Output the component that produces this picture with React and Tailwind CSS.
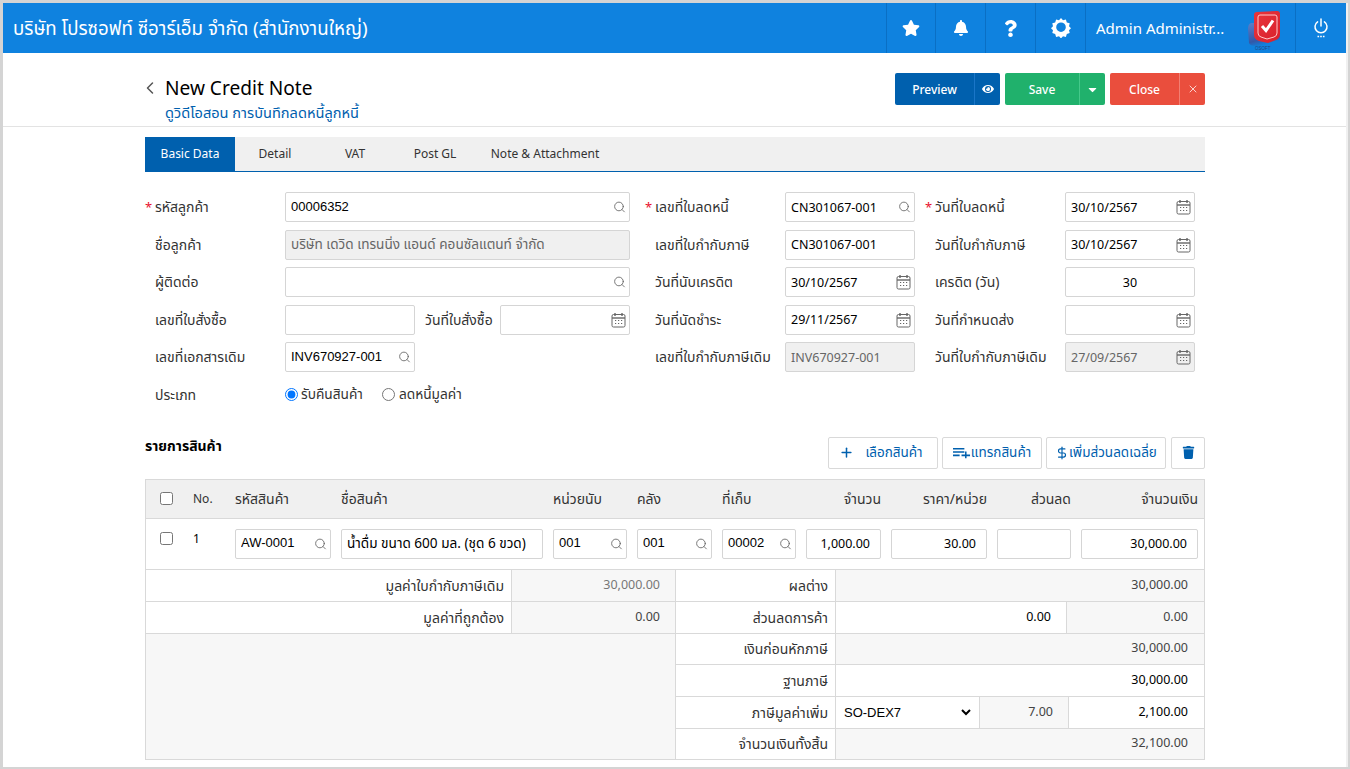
import React from "react";
import { Search, Plus, ChevronLeft, X, DollarSign } from "lucide-react";
import { FaStar, FaBell, FaQuestion, FaTrash, FaCaretDown, FaEye } from "react-icons/fa";

const FONT = "font-['Noto_Sans','Noto_Sans_Thai','DejaVu_Sans',sans-serif]";

function Cal() {
  return (
    <svg width="15" height="16" viewBox="0 0 15 16" fill="none" className="text-[#666]">
      <rect x="1" y="2.5" width="13" height="12.5" rx="1.5" stroke="currentColor" />
      <path d="M1 6h13" stroke="currentColor" strokeWidth="1.4" />
      <path d="M4 1v3M11 1v3" stroke="currentColor" strokeWidth="1.4" />
      <path d="M4 8.5h1.2M7 8.5h1.2M10 8.5h1.2M4 11.5h1.2M7 11.5h1.2M10 11.5h1.2" stroke="currentColor" strokeWidth="1.2" />
    </svg>
  );
}

function Field({ value = "", icon, disabled, align, w, arial, thai, cls = "", h = "h-[30px]" }) {
  return (
    <div className={`relative ${h} ${w || "w-full"} ${cls}`}>
      <input
        readOnly
        value={value}
        className={`h-full w-full rounded-[2px] border border-[#d5d5d5] px-[5px] outline-none ${
          disabled ? "bg-[#f0f0f0] text-[#666]" : "bg-white text-black"
        } ${align === "center" ? "text-center" : align === "right" ? "text-right pr-[10px]" : ""} ${
          arial ? "font-['Liberation_Sans',sans-serif] text-[13px] pb-[2px]" : thai ? "text-[13.6px]" : "text-[12.5px]"
        }`}
      />
      {icon === "search" && (
        <Search size={13} strokeWidth={1.6} className="absolute right-[4px] top-1/2 -translate-y-1/2 text-[#666]" />
      )}
      {icon === "cal" && (
        <span className="absolute right-[4px] top-1/2 -translate-y-1/2">
          <Cal />
        </span>
      )}
    </div>
  );
}

function Row({ label, req, pr = "", children }) {
  return (
    <div className={`flex items-center ${pr}`}>
      <div className="relative w-[140px] shrink-0 pl-[10px] text-[14px] text-[#333] leading-[29px] h-[30px] whitespace-nowrap">
        {req && <span className="absolute left-0 top-[1px] text-[#e8112d] text-[13px]">*</span>}
        {label}
      </div>
      <div className="flex-1 min-w-0 flex items-center">{children}</div>
    </div>
  );
}

function Gear() {
  return (
    <svg width="20" height="20" viewBox="0 0 20 20" className="text-white">
      <path
        fill="currentColor"
        fillRule="evenodd"
        d="M10 0.8l2 2.2 2.9-.7.9 2.9 2.9.9-.7 2.9 2 2-2 2 .7 2.9-2.9.9-.9 2.9-2.9-.7-2 2.2-2-2.2-2.9.7-.9-2.9-2.9-.9.7-2.9-2-2 2-2-.7-2.9 2.9-.9.9-2.9 2.9.7z M10 5.2a4.8 4.8 0 100 9.6 4.8 4.8 0 000-9.6z"
        transform="translate(0 -0.8)"
      />
    </svg>
  );
}

function Power() {
  return (
    <svg width="16" height="20" viewBox="0 0 16 20" fill="none" stroke="white" strokeWidth="1.5">
      <path d="M8 1v7" strokeLinecap="round" />
      <path d="M4.6 3.8a6 6 0 106.8 0" strokeLinecap="round" />
      <path d="M4.5 18.5h1.6M7.2 18.5h1.6M9.9 18.5h1.6" strokeWidth="1.5" />
    </svg>
  );
}

function Logo() {
  return (
    <svg width="36" height="40" viewBox="0 0 36 40">
      <defs>
        <linearGradient id="lg" x1="0" y1="0" x2="0.4" y2="1">
          <stop offset="0" stopColor="#5b7fc8" />
          <stop offset="0.75" stopColor="#3358a8" />
          <stop offset="1" stopColor="#0f82df" />
        </linearGradient>
        <linearGradient id="lr" x1="0" y1="0" x2="1" y2="1">
          <stop offset="0" stopColor="#e8353c" />
          <stop offset="1" stopColor="#d9202b" />
        </linearGradient>
      </defs>
      <path d="M3 12 Q0 13 0 18 L1 32 Q2 35 8 35 L28 35 Q32 33 32 28 L32 12 Z" fill="url(#lg)" />
      <path d="M9 1 Q6 1 6 4 L6 24 Q6 28 11 30 L20 32 L28 29 Q32 27 32 23 L32 3 Q32 0 29 0 Z" fill="url(#lr)" />
      <path d="M12 4 L27 4 Q29 4 29 6 L29 22 Q29 25 26 26 L19 28 L13 26 Q10 25 10 22 L10 6 Q10 4 12 4 Z" fill="none" stroke="#ffc9c9" strokeWidth="1" />
      <path d="M14 15 L18 19.5 L25 9.5" fill="none" stroke="white" strokeWidth="3" />
      <text x="7" y="38.5" fontSize="4.5" fill="#24457f" fontFamily="'Liberation Sans',sans-serif">OSOFT</text>
    </svg>
  );
}

function HeadIcon({ children, w = "w-[50px]" }) {
  return <div className={`${w} h-full border-l border-[#0a6fc4] flex items-center justify-center shrink-0`}>{children}</div>;
}

function BtnPair({ bg, sep, label, w1, w2, icon }) {
  return (
    <div className={`flex h-[32px] rounded-[2px] text-white text-[12px] font-medium ${bg}`}>
      <div className={`${w1} flex items-center justify-center pt-[1px]`}>{label}</div>
      <div className={`${w2} flex items-center justify-center border-l ${sep}`}>{icon}</div>
    </div>
  );
}

function Tool({ w, children }) {
  return (
    <div className={`${w} h-[32px] border border-[#d9d9d9] rounded-[2px] flex items-center justify-center text-[13.5px] text-[#0060ae] bg-white whitespace-nowrap`}>
      {children}
    </div>
  );
}

function Sum({ label, children, h = "h-[32px]", last }) {
  return (
    <div className={`flex ${h} ${last ? "" : "border-b border-[#d9d9d9]"}`}>
      <div className="w-[160px] shrink-0 border-r border-[#d9d9d9] text-right pr-[7px] text-[14px] text-[#333] flex items-center justify-end bg-white">
        {label}
      </div>
      <div className="flex-1 flex min-w-0">{children}</div>
    </div>
  );
}

function Val({ children, grey, dark, cls = "flex-1", pr = "pr-[16px]" }) {
  return (
    <div
      className={`${cls} ${pr} flex items-center justify-end text-[12.5px] ${grey ? "bg-[#f7f7f7]" : "bg-white"} ${
        dark ? "text-black" : "text-[#444]"
      }`}
    >
      {children}
    </div>
  );
}

const COLS = "grid grid-cols-[79px_96px_202px_74px_75px_74px_75px_96px_74px_117px] gap-x-[10px] items-center pr-[7px]";

export default function App() {
  return (
    <div className={`${FONT} w-[1350px] h-[769px] overflow-hidden border-t-[3px] border-l-[3px] border-r-[2px] border-b-[2px] border-[#d4d4d4] bg-white`}>
      <div className="h-full border-r-[2px] border-[#f0f0f0]">
        <header className="h-[50px] bg-[#0f82df] flex items-center text-white">
          <div className="flex-1 pl-[10px] text-[18.7px] whitespace-nowrap">บริษัท โปรซอฟท์ ซีอาร์เอ็ม จำกัด (สำนักงานใหญ่)</div>
          <HeadIcon w="w-[49px]"><FaStar size={18} /></HeadIcon>
          <HeadIcon><FaBell size={16} /></HeadIcon>
          <HeadIcon><FaQuestion size={17} /></HeadIcon>
          <HeadIcon><Gear /></HeadIcon>
          <div className="w-[210px] h-full border-l border-[#0a6fc4] flex items-center pl-[10px] shrink-0 text-[15px] whitespace-nowrap">
            <span className="w-[152px]">Admin Administr...</span>
            <span className="block h-[40px] mt-[6px]"><Logo /></span>
          </div>
          <HeadIcon w="w-[51px]"><Power /></HeadIcon>
        </header>

        <section className="h-[74px] border-b border-[#e3e3e3] pl-[142px] pr-[141px] flex justify-between">
          <div className="flex pt-[23px]">
            <ChevronLeft size={20} strokeWidth={1.8} className="text-[#555] w-[20px] mt-[2px] -translate-x-[5px]" />
            <div>
              <div className="text-[19.1px] leading-[24px] text-black">New Credit Note</div>
              <div className="text-[14.6px] leading-[24px] text-[#0060ae] whitespace-nowrap">ดูวิดีโอสอน การบันทึกลดหนี้ลูกหนี้</div>
            </div>
          </div>
          <div className="flex gap-[5px] pt-[20px]">
            <BtnPair bg="bg-[#0060ae]" sep="border-[#1a76c8]" label="Preview" w1="w-[79px]" w2="w-[26px]" icon={<FaEye size={12} />} />
            <BtnPair bg="bg-[#20b16c]" sep="border-[#45c98a]" label="Save" w1="w-[74px]" w2="w-[26px]" icon={<FaCaretDown size={13} />} />
            <BtnPair bg="bg-[#ea4e3d]" sep="border-[#f27f72]" label="Close" w1="w-[69px]" w2="w-[26px]" icon={<X size={12} strokeWidth={1.5} />} />
          </div>
        </section>

        <main className="pl-[142px] pr-[141px] pt-[10px]">
          <nav className="h-[35px] bg-[#f0f0f0] border-b border-[#0060ae] flex text-[12px] text-[#333]">
            <div className="w-[90px] bg-[#0060ae] text-white flex items-center justify-center">Basic Data</div>
            <div className="w-[80px] flex items-center justify-center">Detail</div>
            <div className="w-[80px] flex items-center justify-center">VAT</div>
            <div className="w-[80px] flex items-center justify-center">Post GL</div>
            <div className="w-[140px] flex items-center justify-center">Note &amp; Attachment</div>
          </nav>

          <div className="mt-[20px] grid grid-cols-[500px_280px_270px] gap-y-[7.5px] w-[1050px]">
            <Row label="รหัสลูกค้า" req pr="pr-[15px]"><Field value="00006352" icon="search" arial /></Row>
            <Row label="เลขที่ใบลดหนี้" req pr="pr-[10px]"><Field value="CN301067-001" icon="search" /></Row>
            <Row label="วันที่ใบลดหนี้" req><Field value="30/10/2567" icon="cal" /></Row>

            <Row label="ชื่อลูกค้า" pr="pr-[15px]"><Field value="บริษัท เดวิด เทรนนิ่ง แอนด์ คอนซัลแตนท์ จำกัด" disabled thai /></Row>
            <Row label="เลขที่ใบกำกับภาษี" pr="pr-[10px]"><Field value="CN301067-001" /></Row>
            <Row label="วันที่ใบกำกับภาษี"><Field value="30/10/2567" icon="cal" /></Row>

            <Row label="ผู้ติดต่อ" pr="pr-[15px]"><Field icon="search" /></Row>
            <Row label="วันที่นับเครดิต" pr="pr-[10px]"><Field value="30/10/2567" icon="cal" /></Row>
            <Row label="เครดิต (วัน)"><Field value="30" align="center" /></Row>

            <Row label="เลขที่ใบสั่งซื้อ" pr="pr-[15px]">
              <Field w="w-[130px]" />
              <div className="w-[85px] pl-[10px] text-[14px] text-[#333] whitespace-nowrap">วันที่ใบสั่งซื้อ</div>
              <Field w="w-[130px]" icon="cal" />
            </Row>
            <Row label="วันที่นัดชำระ" pr="pr-[10px]"><Field value="29/11/2567" icon="cal" /></Row>
            <Row label="วันที่กำหนดส่ง"><Field icon="cal" /></Row>

            <Row label="เลขที่เอกสารเดิม" pr="pr-[15px]"><Field w="w-[130px]" value="INV670927-001" icon="search" arial /></Row>
            <Row label="เลขที่ใบกำกับภาษีเดิม" pr="pr-[10px]"><Field value="INV670927-001" disabled /></Row>
            <Row label="วันที่ใบกำกับภาษีเดิม"><Field value="27/09/2567" icon="cal" disabled /></Row>

            <Row label="ประเภท" pr="pr-[15px]">
              <label className="flex items-center text-[13.7px] text-[#333] whitespace-nowrap">
                <input type="radio" name="t" defaultChecked className="w-[13px] h-[13px] mr-[3px] accent-[#0075ff]" />
                รับคืนสินค้า
              </label>
              <label className="flex items-center text-[13.7px] text-[#333] ml-[19px] whitespace-nowrap">
                <input type="radio" name="t" className="w-[13px] h-[13px] mr-[4px]" />
                ลดหนี้มูลค่า
              </label>
            </Row>
          </div>

          <div className="mt-[26px] flex justify-between items-start h-[43px]">
            <div className="text-[14px] font-bold text-black leading-[20px]">รายการสินค้า</div>
            <div className="flex gap-[4px] pt-[1px]">
              <Tool w="w-[110px] pr-[4px]"><Plus size={15} strokeWidth={2.4} className="mr-[11px]" />เลือกสินค้า</Tool>
              <Tool w="w-[100px]">
                <svg width="18" height="12" viewBox="0 0 19 12" fill="none" stroke="currentColor" strokeWidth="1.6">
                  <path d="M0 1.5h12M0 5h12M0 8.5h7M9 8.5h9M13.5 4.5v7" />
                </svg>
                แทรกสินค้า
              </Tool>
              <Tool w="w-[120px]"><DollarSign size={14} strokeWidth={2} />เพิ่มส่วนลดเฉลี่ย</Tool>
              <Tool w="w-[34px] ml-[1px]"><FaTrash size={13} /></Tool>
            </div>
          </div>

          <div className="border border-[#d9d9d9] w-[1060px] h-[281px]">
            <div className={`h-[39px] bg-[#f0f0f0] border-b border-[#d9d9d9] ${COLS} text-[14px] text-[#333]`}>
              <div className="flex items-center pl-[14px]">
                <input type="checkbox" className="w-[13px] h-[13px]" />
                <span className="ml-[20px] text-[12px]">No.</span>
              </div>
              <div className="whitespace-nowrap">รหัสสินค้า</div>
              <div>ชื่อสินค้า</div>
              <div>หน่วยนับ</div>
              <div>คลัง</div>
              <div>ที่เก็บ</div>
              <div className="text-right">จำนวน</div>
              <div className="text-right">ราคา/หน่วย</div>
              <div className="text-right">ส่วนลด</div>
              <div className="text-right">จำนวนเงิน</div>
            </div>
            <div className={`h-[51px] border-b border-[#d9d9d9] ${COLS} text-[12px]`}>
              <div className="flex items-center pl-[14px] -mt-[10px] text-black">
                <input type="checkbox" className="w-[13px] h-[13px]" />
                <span className="ml-[20px]">1</span>
              </div>
              <Field value="AW-0001" icon="search" arial />
              <Field value="น้ำดื่ม ขนาด 600 มล. (ชุด 6 ขวด)" thai />
              <Field value="001" icon="search" arial />
              <Field value="001" icon="search" arial />
              <Field value="00002" icon="search" arial />
              <Field value="1,000.00" align="right" />
              <Field value="30.00" align="right" />
              <Field value="" align="right" />
              <Field value="30,000.00" align="right" />
            </div>

            <div className="flex h-[189px]">
              <div className="w-[530px] shrink-0 border-r border-[#d9d9d9] flex flex-col">
                <div className="flex h-[32px] border-b border-[#d9d9d9]">
                  <div className="w-[366px] border-r border-[#d9d9d9] flex items-center justify-end pr-[7px] text-[14px] text-[#333]">มูลค่าใบกำกับภาษีเดิม</div>
                  <Val grey pr="pr-[15px]"><span className="text-[#777]">30,000.00</span></Val>
                </div>
                <div className="flex h-[32px] border-b border-[#d9d9d9]">
                  <div className="w-[366px] border-r border-[#d9d9d9] flex items-center justify-end pr-[7px] text-[14px] text-[#333]">มูลค่าที่ถูกต้อง</div>
                  <Val grey pr="pr-[15px]">0.00</Val>
                </div>
                <div className="flex-1 bg-[#f7f7f7]"></div>
              </div>
              <div className="flex-1 flex flex-col min-w-0">
                <Sum label="ผลต่าง"><Val grey>30,000.00</Val></Sum>
                <Sum label="ส่วนลดการค้า">
                  <Val dark cls="w-[231px] border-r border-[#d9d9d9]" pr="pr-[15px]">0.00</Val>
                  <Val grey>0.00</Val>
                </Sum>
                <Sum label="เงินก่อนหักภาษี" h="h-[31px]"><Val grey>30,000.00</Val></Sum>
                <Sum label="ฐานภาษี"><Val dark>30,000.00</Val></Sum>
                <Sum label="ภาษีมูลค่าเพิ่ม">
                  <div className="w-[144px] border-r border-[#d9d9d9] flex items-center pl-[4px] pr-[5px]">
                    <select className="w-full h-full bg-white text-[13px] text-black outline-none font-['Liberation_Sans',sans-serif]">
                      <option>SO-DEX7</option>
                    </select>
                  </div>
                  <Val grey cls="w-[89px] border-r border-[#d9d9d9]" pr="pr-[15px]">7.00</Val>
                  <Val dark>2,100.00</Val>
                </Sum>
                <Sum label="จำนวนเงินทั้งสิ้น" h="h-[30px]" last><Val grey>32,100.00</Val></Sum>
              </div>
            </div>
          </div>
        </main>
      </div>
    </div>
  );
}
